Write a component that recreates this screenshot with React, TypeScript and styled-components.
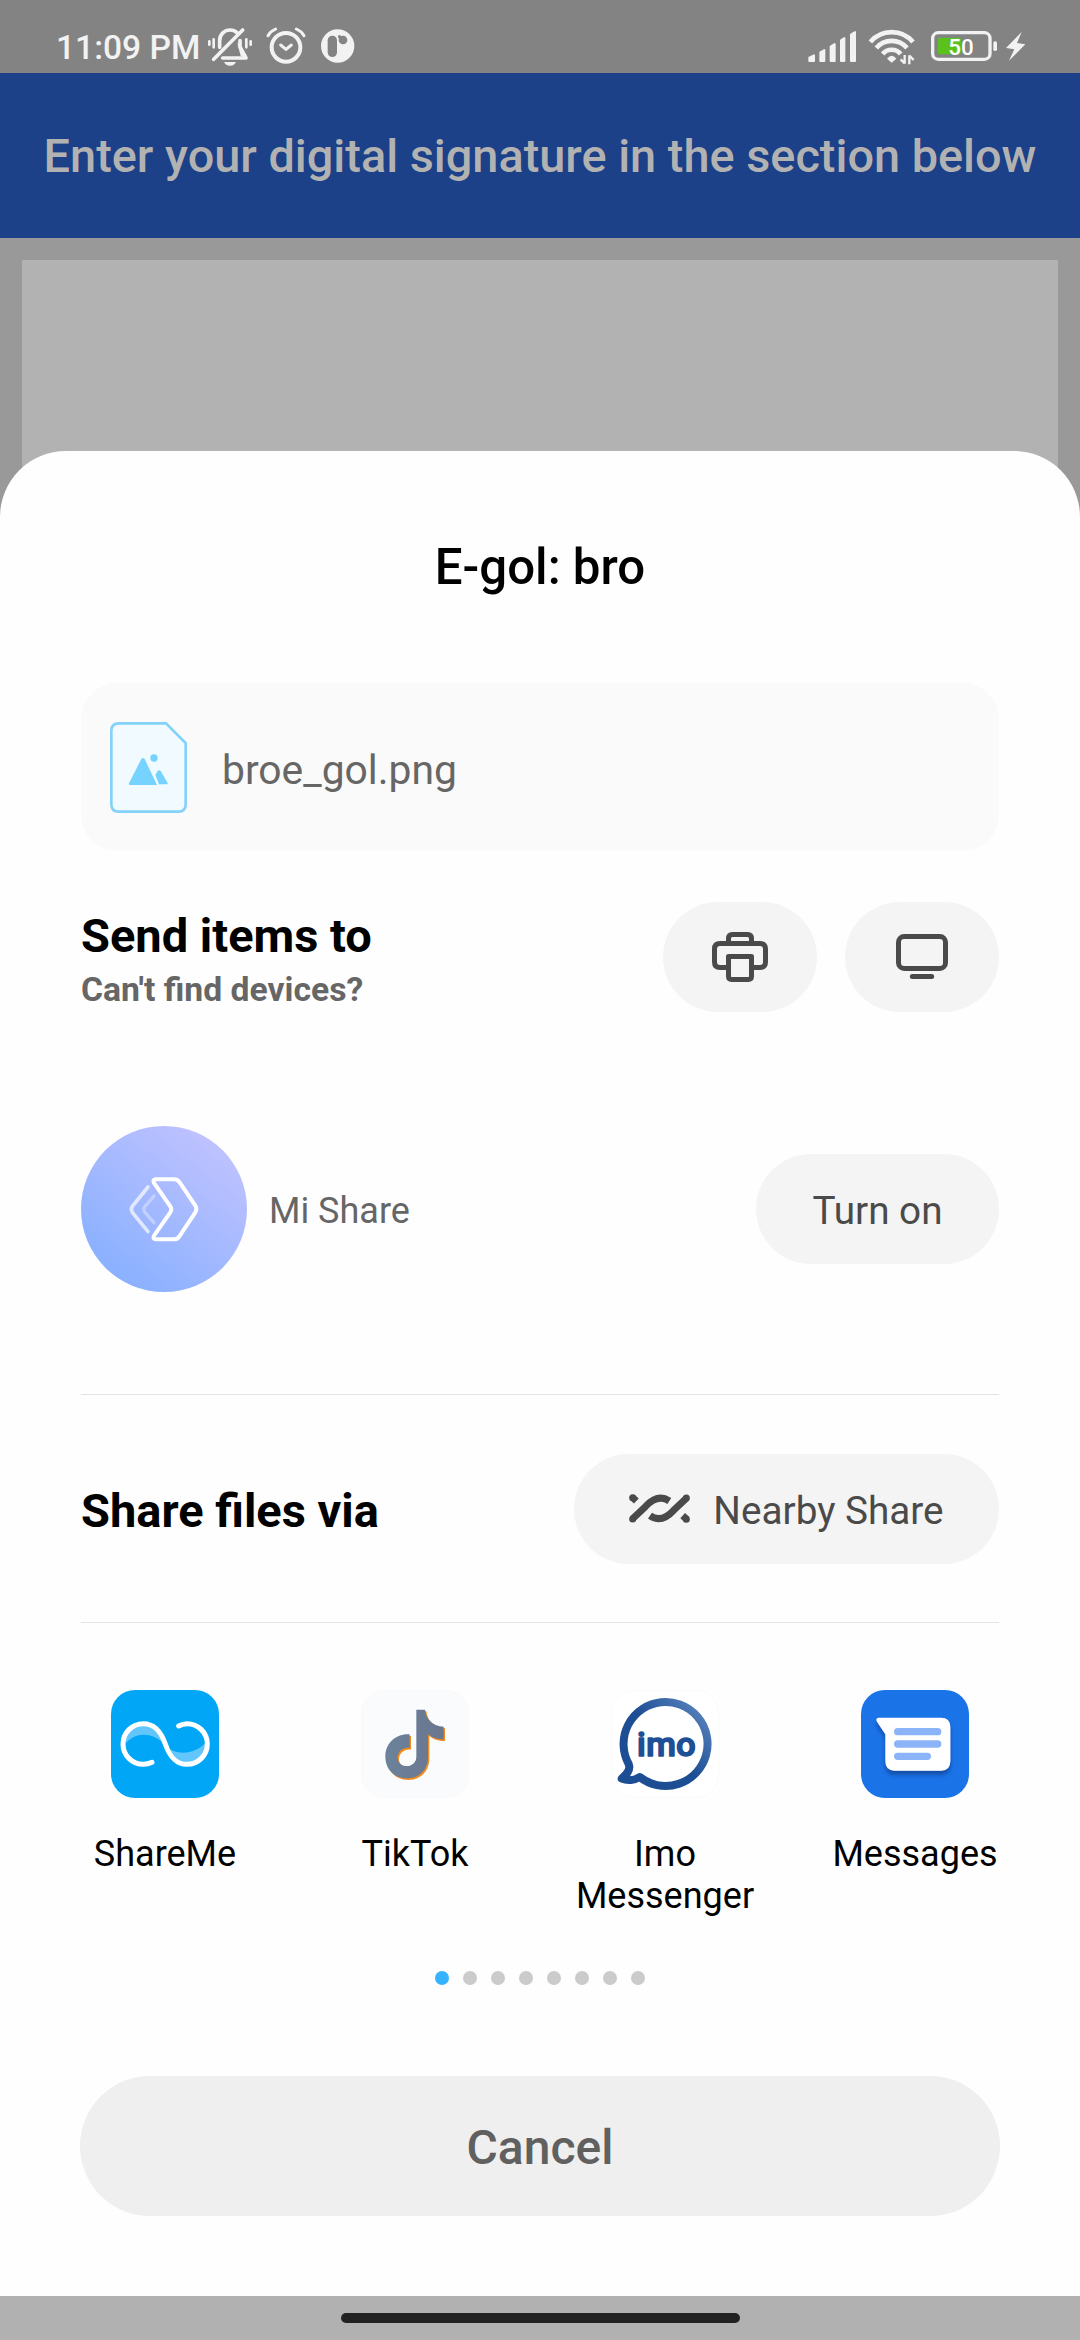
import React from "react";
import styled, { createGlobalStyle } from "styled-components";

const GlobalStyle = createGlobalStyle`
  *, *::before, *::after { box-sizing: border-box; }
  html, body { margin: 0; padding: 0; }
  body { font-family: Roboto, "Noto Sans", sans-serif; background: #999999; }
  svg { display: block; flex: none; }
  button { font: inherit; border: 0; padding: 0; margin: 0; }
`;

const Screen = styled.div`
  width: 1080px;
  height: 2340px;
  display: flex;
  flex-direction: column;
  overflow: hidden;
  background: #b1b1b1;
`;

/* ---------- status bar ---------- */

const StatusBar = styled.div`
  height: 73px;
  flex: none;
  display: flex;
  justify-content: space-between;
  padding: 0 51px 0 56px;
  background: #838383;
  color: #f2f2f2;
`;

const StatusGroup = styled.div`
  display: flex;
  align-items: flex-start;
`;

const StatusGap = styled.span<{ $size: number }>`
  width: ${(p) => p.$size}px;
  flex: none;
`;

const Clock = styled.span`
  width: 149px;
  flex: none;
  padding-top: 28px;
  font-size: 33.6px;
  line-height: 40px;
  font-weight: 500;
  white-space: nowrap;
`;

/* ---------- page behind the sheet ---------- */

const Banner = styled.header`
  height: 165px;
  flex: none;
  display: flex;
  align-items: center;
  justify-content: center;
  background: #1c4188;
  color: #b2b2b2;
  font-size: 46.85px;
  font-weight: 500;
  white-space: nowrap;
`;

const Page = styled.div`
  height: 283px;
  flex: none;
  display: flex;
  padding: 22px 22px 0;
  background: #999999;
`;

const SignaturePad = styled.div`
  flex: 1;
  background: #b2b2b2;
`;

/* ---------- share sheet ---------- */

const Sheet = styled.section`
  position: relative;
  height: 1845px;
  flex: none;
  margin-top: -70px;
  padding: 0 81px;
  display: flex;
  flex-direction: column;
  border-radius: 66px 66px 0 0;
  background: #fefefe;
`;

const SheetTitle = styled.h1`
  margin: 0;
  height: 232px;
  flex: none;
  display: flex;
  align-items: center;
  justify-content: center;
  color: #000;
  font-size: 49.2px;
  font-weight: 500;
`;

const FileCard = styled.div`
  height: 168px;
  flex: none;
  display: flex;
  align-items: center;
  gap: 35px;
  padding: 0 29px;
  border-radius: 36px;
  background: #fafafa;
`;

const FileName = styled.span`
  padding-top: 5px;
  color: #666;
  font-size: 40.8px;
  line-height: 50px;
`;

const SendRow = styled.div`
  height: 110px;
  margin-top: 51px;
  flex: none;
  display: flex;
  justify-content: space-between;
`;

const SendText = styled.div`
  display: flex;
  flex-direction: column;
  padding-top: 6px;
`;

const SectionTitle = styled.h2<{ $drop?: number }>`
  margin: 0;
  padding-top: ${(p) => p.$drop ?? 0}px;
  color: #000;
  font-size: 47px;
  line-height: 56px;
  font-weight: 700;
`;

const HelpLink = styled.span`
  color: #666;
  font-size: 33.7px;
  line-height: 51px;
  font-weight: 700;
`;

const ButtonGroup = styled.div`
  display: flex;
  gap: 28px;
`;

const PillButton = styled.button<{ $width: number }>`
  width: ${(p) => p.$width}px;
  height: 110px;
  display: flex;
  align-items: center;
  justify-content: center;
  gap: 23px;
  border-radius: 55px;
  background: #f4f4f4;
  color: #4a4a4a;
  font-size: 38.7px;
  white-space: nowrap;
`;

const PillLabel = styled.span`
  padding-top: 3px;
`;

const DeviceRow = styled.div`
  height: 166px;
  margin-top: 114px;
  flex: none;
  display: flex;
  align-items: center;
  justify-content: space-between;
`;

const Device = styled.div`
  display: flex;
  align-items: center;
  gap: 22px;
`;

const DeviceName = styled.span`
  padding-top: 3px;
  color: #666;
  font-size: 36px;
`;

const DeviceAvatar = styled.div`
  width: 166px;
  height: 166px;
  display: flex;
  align-items: center;
  justify-content: center;
  border-radius: 50%;
  background: linear-gradient(38deg, #88b0ff 12%, #c0c2ff 88%);
`;

const Divider = styled.hr<{ $top?: number }>`
  width: 100%;
  height: 1px;
  flex: none;
  margin: ${(p) => p.$top ?? 0}px 0 0;
  border: 0;
  background: #e4e4e4;
`;

const ShareRow = styled.div`
  height: 227px;
  flex: none;
  display: flex;
  align-items: center;
  justify-content: space-between;
`;

const AppGrid = styled.div`
  display: grid;
  grid-template-columns: repeat(4, 250px);
  margin: 67px -41px 0;
  height: 227px;
  flex: none;
`;

const AppItem = styled.div`
  display: flex;
  flex-direction: column;
  align-items: center;
  gap: 35px;
`;

const AppLabel = styled.span`
  width: 190px;
  text-align: center;
  color: #000;
  font-size: 36px;
  line-height: 42px;
`;

const Dots = styled.div`
  display: flex;
  justify-content: center;
  gap: 14px;
  margin-top: 54px;
  flex: none;
`;

const Dot = styled.span<{ $active: boolean }>`
  width: 14px;
  height: 14px;
  border-radius: 50%;
  background: ${(p) => (p.$active ? "#36b3ff" : "#cbcbcb")};
`;

const CancelButton = styled.button`
  && {
    height: 140px;
    margin: 91px -1px 0;
    padding-top: 3px;
  }
  flex: none;
  border-radius: 70px;
  background: #efefef;
  color: #606060;
  font-size: 48px;
  font-weight: 500;
`;

const NavBar = styled.div`
  height: 44px;
  flex: none;
  display: flex;
  justify-content: center;
  padding-top: 17px;
`;

const HomeHandle = styled.div`
  width: 399px;
  height: 10px;
  border-radius: 5px;
  background: #222;
`;

/* ---------- icons ---------- */

const BellOffIcon = () => (
  <svg width="52" height="73" viewBox="615 0 156 219" fill="none" stroke="#f2f2f2" strokeLinecap="round">
    <path d="M659 142V122C659 102 674 90 690 90C699 90 706 93 711 98" strokeWidth="11" />
    <path d="M720 122V141L738 174H668" strokeWidth="11" strokeLinejoin="round" />
    <path d="M712 128L728 150L738 174L722 168Z" fill="#f2f2f2" stroke="none" />
    <path d="M641 178L728 90" strokeWidth="11" />
    <path d="M672 186H708Q703 197 690 197Q677 197 672 186Z" fill="#f2f2f2" stroke="none" />
    <path d="M628 124V134M641 118V142M739 118V142M752 124V134" strokeWidth="8" />
  </svg>
);

const AlarmIcon = () => (
  <svg width="48" height="73" viewBox="787 0 144 219" fill="none" stroke="#f2f2f2" strokeLinecap="round">
    <circle cx="859" cy="142" r="43" strokeWidth="12" />
    <path d="M843 135L859 148L875 135" strokeWidth="9" />
    <path d="M805 107Q812 94 828 87M890 87Q906 94 913 107" strokeWidth="9" />
  </svg>
);

const NotificationIcon = () => (
  <svg width="52" height="73" viewBox="931 0 156 219">
    <circle cx="1014" cy="138" r="50" fill="#f2f2f2" />
    <rect x="984" y="107" width="28" height="64" rx="14" fill="#838383" />
    <circle cx="1030" cy="120" r="13" fill="#838383" />
    <rect x="1015" y="106" width="9" height="9" rx="3" fill="#838383" />
  </svg>
);

const SignalIcon = () => (
  <svg width="54" height="73" viewBox="78 0 162 219" fill="#f2f2f2" stroke="#f2f2f2" strokeWidth="6" strokeLinejoin="round">
    <path d="M88 173L102 166V183H88ZM121 157L133 150V183H121ZM152 140L164 132V183H152ZM183 121L193 114V183H183ZM213 104L225 96V183H213Z" />
  </svg>
);

const WifiIcon = () => (
  <svg width="52" height="73" viewBox="258 0 156 219" fill="none" stroke="#f2f2f2" strokeWidth="14">
    <path d="M271 126A84 84 0 0 1 399 126" />
    <path d="M289 144A60 60 0 0 1 381 144" />
    <path d="M308 162A35 35 0 0 1 362 162" />
    <path d="M321 176Q335 159 349 176L335 188Z" fill="#f2f2f2" stroke="none" />
    <path d="M374 165V191M388 193V166M374 190L362 178M388 167L401 180" strokeWidth="7" />
  </svg>
);

const BatteryIcon = () => (
  <svg width="72" height="73" viewBox="441 0 216 219">
    <rect x="458" y="98" width="172" height="80" rx="17" fill="none" stroke="#f2f2f2" strokeWidth="10" />
    <rect x="473" y="113" width="70" height="50" rx="7" fill="#5bc21d" />
    <rect x="640" y="124" width="11" height="29" rx="5" fill="#f2f2f2" />
    <text x="543" y="165" fontSize="67" fontWeight="500" fill="#fff" textAnchor="middle" fontFamily="Roboto, sans-serif">50</text>
  </svg>
);

const BoltIcon = () => (
  <svg width="30" height="73" viewBox="657 0 90 219" fill="#f2f2f2">
    <path d="M725 96L678 144L703 148L687 182L736 133L711 129Z" />
  </svg>
);

const ImageFileIcon = () => (
  <svg width="77" height="91" viewBox="150 183 231 273">
    <path d="M176 187H318L377 246V430Q377 452 355 452H176Q154 452 154 430V209Q154 187 176 187Z" fill="#f0faff" stroke="#84d2f9" strokeWidth="8" />
    <path d="M244 294Q249 288 254 294L291 372H209Q205 371 207 367Z" fill="#76d2ff" />
    <path d="M286 342L293 330Q297 325 302 330L323 366Q324 370 320 370H297Z" fill="#76d2ff" />
    <circle cx="282" cy="291" r="11" fill="#76d2ff" />
  </svg>
);

const PrinterIcon = () => (
  <svg width="56" height="50" viewBox="216 156 168 150" fill="none" stroke="#4a4a4a" strokeWidth="15">
    <path d="M265.500 186V176Q265.500 163.500 277 163.500H323Q334.500 163.500 334.500 176V186" />
    <path d="M262 262.500H240Q223.500 262.500 223.500 246V207Q223.500 190.500 240 190.500H360Q376.500 190.500 376.500 207V246Q376.500 262.500 360 262.500H338" />
    <path d="M265.500 229.500H334.500V289Q334.500 298.500 325 298.500H275Q265.500 298.500 265.500 289Z" strokeLinejoin="round" />
  </svg>
);

const DisplayIcon = () => (
  <svg width="52" height="46" viewBox="768 165 156 138" fill="none" stroke="#4a4a4a" strokeWidth="15">
    <rect x="775.500" y="172.500" width="141" height="96" rx="17" />
    <path d="M817 292.500H875" strokeLinecap="round" />
  </svg>
);

const MiShareIcon = () => (
  <svg width="74" height="68" viewBox="201 224 222 204" fill="none" stroke="#fff" strokeLinecap="round">
    <path d="M287 237H343Q352 237 358 245L406 316Q412 326 406 336L358 408Q352 417 343 417H287Q277 416 282 406L331 336Q337 327 331 318L282 248Q277 238 287 237Z" strokeWidth="12" />
    <path d="M264 260L217 318Q211 327 217 336L264 394" strokeWidth="11" opacity=".68" />
    <path d="M282 287L254 319Q249 327 254 335L282 367" strokeWidth="10" opacity=".35" />
  </svg>
);

const NearbyIcon = () => (
  <svg width="61" height="29" viewBox="207 222 183 87" fill="none" stroke="#4a4a4a" strokeWidth="21">
    <path d="M217 297L256 260Q293 220 328 243" />
    <path d="M380 234L341 271Q304 311 270 287" />
    <path d="M216 231L229 243M381 299L368 287" />
    <g fill="#4a4a4a" stroke="none">
      <circle cx="218" cy="297" r="10.500" />
      <circle cx="379" cy="234" r="10.500" />
      <circle cx="218" cy="233" r="10.500" />
      <circle cx="379" cy="298" r="10.500" />
    </g>
  </svg>
);

const ShareMeIcon = () => (
  <svg width="108" height="108" viewBox="93 90 324 324">
    <rect x="93" y="90" width="324" height="324" rx="72" fill="#02a6f6" />
    <path d="M135 252C142 205 165 192 190 192C222 192 240 220 252 250C215 215 165 215 135 252Z" fill="#62c6fa" />
    <path d="M260 262C290 286 345 285 379 246C377 290 350 310 321 310C290 310 272 290 260 262Z" fill="#62c6fa" />
    <path d="M216 307C208 311 199 313 190 313A61 61 0 0 1 190 191C225 191 243 215 256 252C269 290 287 313 321 313A61 61 0 0 0 321 191C312 191 303 194 296 198" fill="none" stroke="#fff" strokeWidth="15" strokeLinecap="round" />
  </svg>
);

const NOTE =
  "M1010 149H1036C1039 178 1060 198 1092 200V238C1072 238 1055 232 1045 223V290C1045 330 1018 355 982 355C945 355 917 328 917 290C917 250 948 220 990 223V264C970 261 954 275 954 293C954 308 966 318 981 318C998 318 1010 306 1010 290Z";

const TikTokIcon = () => (
  <svg width="108" height="108" viewBox="844 90 324 324">
    <defs>
      <linearGradient id="note" x1="0" y1="0" x2="1" y2="0">
        <stop offset="0" stopColor="#6c829a" />
        <stop offset="1" stopColor="#6a7690" />
      </linearGradient>
    </defs>
    <rect x="844.500" y="90.500" width="323" height="323" rx="72" fill="#f9fbfd" stroke="#f4f4f5" />
    <path d={NOTE} fill="#f28a1c" transform="translate(4 5)" />
    <path d={NOTE} fill="url(#note)" />
  </svg>
);

const ImoIcon = () => (
  <svg width="108" height="108" viewBox="154 90 324 324">
    <defs>
      <linearGradient id="imo" x1=".45" y1=".45" x2=".9" y2=".05">
        <stop offset="0" stopColor="#1d4d93" />
        <stop offset="1" stopColor="#5580bb" />
      </linearGradient>
    </defs>
    <rect x="155" y="91" width="322" height="322" rx="72" fill="#fff" stroke="#f7f7f7" strokeWidth="2" />
    <path d="M207 312A126 126 0 1 1 240 351C225 361 203 363 186 356C197 346 210 336 209 320Z" fill="none" stroke="url(#imo)" strokeWidth="24" strokeLinejoin="round" />
    <text x="320" y="287" textAnchor="middle" textLength="176" fontFamily="Roboto, sans-serif" fontWeight="500" fontSize="102" fill="#1f4f95" stroke="#1f4f95" strokeWidth="5" strokeLinejoin="round">imo</text>
  </svg>
);

const MessagesIcon = () => (
  <svg width="108" height="108" viewBox="903 90 324 324">
    <defs>
      <filter id="soft" x="-20%" y="-20%" width="140%" height="150%">
        <feDropShadow dx="0" dy="12" stdDeviation="7" floodColor="#0d3f8f" floodOpacity=".75" />
      </filter>
    </defs>
    <rect x="903" y="90" width="324" height="324" rx="72" fill="#1b73e8" />
    <path d="M956 173H1143Q1171 173 1171 201V303Q1171 332 1143 332H1004Q976 332 976 303V223L951 185Q945 174 956 173Z" fill="#fff" filter="url(#soft)" />
    <g fill="#8bb4f8">
      <rect x="1002" y="204" width="142" height="22" rx="11" />
      <rect x="1002" y="241" width="142" height="22" rx="11" />
      <rect x="1002" y="278" width="111" height="22" rx="11" />
    </g>
  </svg>
);

const APPS = [
  { name: "ShareMe", Icon: ShareMeIcon },
  { name: "TikTok", Icon: TikTokIcon },
  { name: "Imo Messenger", Icon: ImoIcon },
  { name: "Messages", Icon: MessagesIcon },
];

const PAGE_COUNT = 8;

export default function App() {
  return (
    <>
      <GlobalStyle />
      <Screen>
        <StatusBar>
          <StatusGroup>
            <Clock>11:09 PM</Clock>
            <BellOffIcon />
            <StatusGap $size={5} />
            <AlarmIcon />
            <NotificationIcon />
          </StatusGroup>
          <StatusGroup>
            <SignalIcon />
            <StatusGap $size={6} />
            <WifiIcon />
            <StatusGap $size={9} />
            <BatteryIcon />
            <BoltIcon />
          </StatusGroup>
        </StatusBar>
        <Banner>Enter your digital signature in the section below</Banner>
        <Page>
          <SignaturePad />
        </Page>
        <Sheet>
          <SheetTitle>E-gol: bro</SheetTitle>
          <FileCard>
            <ImageFileIcon />
            <FileName>broe_gol.png</FileName>
          </FileCard>
          <SendRow>
            <SendText>
              <SectionTitle>Send items to</SectionTitle>
              <HelpLink>Can't find devices?</HelpLink>
            </SendText>
            <ButtonGroup>
              <PillButton $width={154} aria-label="Print">
                <PrinterIcon />
              </PillButton>
              <PillButton $width={154} aria-label="Cast">
                <DisplayIcon />
              </PillButton>
            </ButtonGroup>
          </SendRow>
          <DeviceRow>
            <Device>
              <DeviceAvatar>
                <MiShareIcon />
              </DeviceAvatar>
              <DeviceName>Mi Share</DeviceName>
            </Device>
            <PillButton $width={243}>
              <PillLabel>Turn on</PillLabel>
            </PillButton>
          </DeviceRow>
          <Divider $top={102} />
          <ShareRow>
            <SectionTitle $drop={4}>Share files via</SectionTitle>
            <PillButton $width={425}>
              <NearbyIcon />
              <PillLabel>Nearby Share</PillLabel>
            </PillButton>
          </ShareRow>
          <Divider />
          <AppGrid>
            {APPS.map(({ name, Icon }) => (
              <AppItem key={name}>
                <Icon />
                <AppLabel>{name}</AppLabel>
              </AppItem>
            ))}
          </AppGrid>
          <Dots>
            {Array.from({ length: PAGE_COUNT }, (_, i) => (
              <Dot key={i} $active={i === 0} />
            ))}
          </Dots>
          <CancelButton>Cancel</CancelButton>
        </Sheet>
        <NavBar>
          <HomeHandle />
        </NavBar>
      </Screen>
    </>
  );
}
